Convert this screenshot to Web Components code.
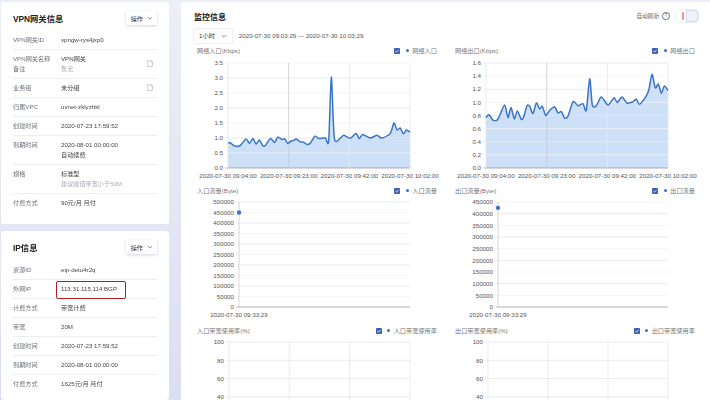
<!DOCTYPE html>
<html lang="zh">
<head>
<meta charset="utf-8">
<title>VPN网关详情</title>
<style>
  html, body { margin: 0; height: 400px; overflow: hidden; }
  body {
    background: linear-gradient(#eceef8, #dcdff0);
    font-family: "Liberation Sans", "Noto Sans CJK SC", sans-serif; color: #333;
  }
  .page {
    display: grid;
    grid-template-columns: 168px 1fr;
    column-gap: 12px;
    padding: 2px 0 0 1px;
    height: 398px;
    filter: blur(0.45px);
  }
  .side { display: flex; flex-direction: column; gap: 7px; min-height: 0; }
</style>
</head>
<body>
<div class="page">
  <div class="side">
    <info-card heading="VPN网关信息">
      <info-row label="VPN网关ID" value="vpngw-rys4jxp0"></info-row>
      <info-row label="VPN网关名称" value="VPN网关" label2="备注" note="暂无" editable></info-row>
      <info-row label="业务组" value="未分组" editable></info-row>
      <info-row label="归属VPC" value="uvnet-zklyzhkl"></info-row>
      <info-row label="创建时间" value="2020-07-23 17:59:52"></info-row>
      <info-row label="到期时间" value="2020-08-01 00:00:00" value2="自动续费"></info-row>
      <info-row label="规格" value="标准型" note="建议峰值带宽小于50M"></info-row>
      <info-row label="付费方式" value="90元/月 月付" last></info-row>
    </info-card>
    <info-card heading="IP信息" fill>
      <info-row label="资源ID" value="eip-detu4r2q"></info-row>
      <info-row label="外网IP" value="113.31.115.114 BGP" marked></info-row>
      <info-row label="计费方式" value="带宽计费"></info-row>
      <info-row label="带宽" value="20M"></info-row>
      <info-row label="创建时间" value="2020-07-23 17:59:52"></info-row>
      <info-row label="到期时间" value="2020-08-01 00:00:00"></info-row>
      <info-row label="付费方式" value="1625元/月 月付" last></info-row>
    </info-card>
  </div>
  <monitor-panel>
    <line-chart heading="网络入口(Kbps)" legend="网络入口" left="31" ymax="3.5" ystep="0.5" dec="1" series="in"></line-chart>
    <line-chart heading="网络出口(Kbps)" legend="网络出口" left="31" ymax="1.6" ystep="0.2" dec="1" series="out"></line-chart>
    <line-chart heading="入口流量(Byte)" legend="入口流量" left="42" ymax="500000" ystep="50000" point="450000"></line-chart>
    <line-chart heading="出口流量(Byte)" legend="出口流量" left="43" ymax="450000" ystep="50000" point="425000"></line-chart>
    <line-chart heading="入口带宽使用率(%)" legend="入口带宽使用率" left="32" ymax="100" ystep="20"></line-chart>
    <line-chart heading="出口带宽使用率(%)" legend="出口带宽使用率" left="33" ymax="100" ystep="20"></line-chart>
  </monitor-panel>
</div>

<script>
const CHEVRON = `<svg width="6" height="6" viewBox="0 0 8 8" fill="none" stroke="#666" stroke-width="1"><path d="M1.2 2.8 4 5.6l2.8-2.8"/></svg>`;

class OpButton extends HTMLElement {
  constructor() {
    super();
    this.attachShadow({ mode: "open" }).innerHTML = `
      <style>
        :host {
          display: inline-flex; align-items: center; gap: 4px;
          height: 14px; padding: 0 4px 0 5px;
          background: #fff; border-radius: 1px;
          box-shadow: 0 1px 3px rgba(30, 40, 90, 0.2);
          font-size: 6.2px; color: #333;
        }
      </style>
      <slot></slot>${CHEVRON}`;
  }
}

class InfoCard extends HTMLElement {
  constructor() {
    super();
    this.attachShadow({ mode: "open" }).innerHTML = `
      <style>
        :host {
          display: block; box-sizing: border-box;
          background: #fff; border-radius: 3px;
          padding: 8.5px 12px 12.5px 12px;
        }
        :host([fill]) { flex: 1; min-height: 0; padding-bottom: 0; overflow: hidden; }
        header {
          display: flex; align-items: center; justify-content: space-between;
          height: 15px; margin-bottom: 5px;
        }
        :host([fill]) header { margin-bottom: 6px; }
        h2 { margin: 0; font-size: 8.3px; font-weight: 700; color: #222; }
      </style>
      <header><h2></h2><op-button>操作</op-button></header>
      <slot></slot>`;
    this.shadowRoot.querySelector("h2").textContent = this.getAttribute("heading");
  }
}

class InfoRow extends HTMLElement {
  constructor() {
    super();
    const label = this.getAttribute("label");
    const label2 = this.getAttribute("label2");
    const value = this.getAttribute("value");
    const value2 = this.getAttribute("value2");
    const note = this.getAttribute("note");
    this.attachShadow({ mode: "open" }).innerHTML = `
      <style>
        :host {
          display: grid; grid-template-columns: 48px 1fr; position: relative;
          padding: 4px 0; border-bottom: 1px solid #eceef2;
          font-size: 6.15px; line-height: 10px; color: #444;
        }
        :host([last]) { border-bottom: 0; }
        .k { color: #6c7078; white-space: nowrap; }
        .note { color: #a6a9b0; }
        .v { white-space: nowrap; }
        svg { position: absolute; right: 4px; top: 50%; margin-top: -3.5px; }
        .mark {
          position: absolute; left: 43px; top: 1.8px; width: 69.5px; height: 17.4px; box-sizing: border-box;
          border: 1.8px solid #b01c24; border-radius: 2px;
        }
      </style>
      <div class="k"><div>${label}</div>${label2 ? `<div>${label2}</div>` : ""}</div>
      <div class="v"><div>${value}</div>
        ${value2 ? `<div>${value2}</div>` : ""}
        ${note ? `<div class="note">${note}</div>` : ""}
      </div>
      ${this.hasAttribute("editable") ? `<svg width="6" height="7" viewBox="0 0 6 7" fill="none" stroke="#aaa" stroke-width=".6"><path d="M.3.3h3.6l1.8 1.8v4.6H.3zM3.9.3v1.8h1.8"/></svg>` : ""}
      ${this.hasAttribute("marked") ? `<div class="mark"></div>` : ""}`;
  }
}

class MonitorPanel extends HTMLElement {
  constructor() {
    super();
    this.attachShadow({ mode: "open" }).innerHTML = `
      <style>
        :host {
          display: block; box-sizing: border-box; height: 398px; overflow: hidden;
          background: #fff; padding: 8px 15px 0 13px; border-radius: 3px 0 0 0;
        }
        .top { display: flex; align-items: center; justify-content: space-between; height: 12px; }
        h2 { margin: 0; font-size: 8px; font-weight: 700; color: #222; }
        .refresh { display: flex; align-items: center; font-size: 5.6px; color: #666; margin-right: -3px; }
        .help {
          width: 5.5px; height: 5.5px; border: 0.8px solid #6b7180; border-radius: 50%;
          font-size: 4.5px; line-height: 5.5px; text-align: center; margin: 0 6px 0 3px;
        }
        .toggle {
          width: 22.5px; height: 11.5px; display: flex; box-sizing: border-box; border-radius: 2px;
          box-shadow: 0 0 2px rgba(30, 40, 90, 0.25); overflow: hidden;
        }
        .toggle i { flex: 1; background: #fff; position: relative; }
        .toggle i + i { background: #eef0fa; border: 0.6px solid #d6d9e6; }
        .toggle i::after { content: ""; position: absolute; left: 6px; top: 2px; width: 2px; height: 7.5px; background: #e39aa0; }
        .toggle i + i::after { display: none; }
        .range { display: flex; align-items: center; gap: 7px; height: 15px; margin: 6px 0 2px; font-size: 6.2px; color: #555; }
        .select {
          display: flex; align-items: center; gap: 6px; height: 14px; padding: 0 5px;
          box-shadow: 0 0 2px rgba(30, 40, 90, 0.2); font-size: 6.2px; color: #333;
        }
        .grid { display: grid; grid-template-columns: 240px 240px; column-gap: 18px; margin-left: 3px; }
      </style>
      <div class="top">
        <h2>监控信息</h2>
        <div class="refresh">自动刷新<span class="help">?</span><span class="toggle"><i></i><i></i></span></div>
      </div>
      <div class="range"><span class="select">1小时 ${CHEVRON}</span><span>2020-07-30 09:03:29 — 2020-07-30 10:03:29</span></div>
      <div class="grid"><slot></slot></div>`;
  }
}

// [x in the plot 0..1, value] read off the reference
const SERIES = {
  in: [[143,.83],[150,.84],[163,.73],[180,.75],[197,.97],[207,.82],[218,.98],[227,.8],[237,.93],[247,.75],[255,.75],[270,.98],[283,.85],[292,1.03],[305,.95],[313,.97],[322,.82],[332,.9],[340,.92],[348,.97],[360,.87],[370,.86],[380,.78],[390,.83],[404,1.06],[415,.98],[435,1.01],[445,.9],[453,3.03],[462,1],[480,1],[490,1.09],[510,.99],[527,1.15],[537,.98],[547,1.12],[570,1],[590,1.09],[603,1],[625,1.1],[632,1.2],[641,1.5],[650,1.27],[660,1.33],[669,1.14],[678,1.27],[689,1.2]].map(([x, v]) => [(x - 143) / 546, v]),
  out: [[139,.77],[148,.81],[160,.73],[172,.73],[180,.8],[195,.96],[205,.77],[214,.92],[224,.75],[233,.87],[245,.74],[252,.78],[262,.95],[270,.94],[280,.83],[290,.99],[300,.9],[308,.94],[318,.8],[330,.88],[345,.93],[355,.84],[365,.86],[375,.76],[385,.79],[400,1.01],[415,.95],[430,.98],[440,.88],[450,1.36],[458,.96],[470,.95],[485,1.08],[505,.96],[523,1.07],[533,1],[547,1.08],[562,.99],[580,1.01],[590,1.05],[600,.97],[620,1.1],[628,1.2],[637,1.43],[647,1.22],[656,1.28],[665,1.14],[674,1.25],[685,1.18]].map(([x, v]) => [(x - 139) / 546, v])
};

// catmull-rom through the points, as a cubic path
function smooth(pts) {
  let d = `${pts[0][0].toFixed(1)} ${pts[0][1].toFixed(1)}`;
  for (let i = 0; i < pts.length - 1; i++) {
    const p0 = pts[i - 1] || pts[i], p1 = pts[i], p2 = pts[i + 1], p3 = pts[i + 2] || p2;
    const c1 = [p1[0] + (p2[0] - p0[0]) / 8, p1[1] + (p2[1] - p0[1]) / 8];
    const c2 = [p2[0] - (p3[0] - p1[0]) / 8, p2[1] - (p3[1] - p1[1]) / 8];
    d += ` C${c1[0].toFixed(1)} ${c1[1].toFixed(1)} ${c2[0].toFixed(1)} ${c2[1].toFixed(1)} ${p2[0].toFixed(1)} ${p2[1].toFixed(1)}`;
  }
  return d;
}

class LineChart extends HTMLElement {
  constructor() {
    super();
    const heading = this.getAttribute("heading");
    const legend = this.getAttribute("legend");
    const tall = this.getAttribute("ymax") === "100" ? 65 : 130;
    this.attachShadow({ mode: "open" }).innerHTML = `
      <style>
        :host { display: block; font-size: 6.2px; color: #777; }
        .head { display: flex; justify-content: space-between; align-items: center; height: 10px; }
        .legend { display: flex; align-items: center; gap: 3.5px; white-space: nowrap; margin-top: 1px; }
        .box {
          width: 6px; height: 6px; background: #3d5fb8; border-radius: 1px; margin-right: 2px;
          display: inline-flex;
        }
        .box svg { width: 6px; height: 6px; }
        .dot { width: 3px; height: 3px; border-radius: 50%; background: #3d6fc8; }
        .plot { display: block; width: 240px; height: ${tall}px; overflow: visible; }
        text { font-size: 6.2px; fill: #555; font-family: "Liberation Sans", sans-serif; }
      </style>
      <div class="head"><span>${heading}</span>
        <span class="legend"><span class="box"><svg viewBox="0 0 6 6" fill="none" stroke="#fff" stroke-width=".8"><path d="M1.3 3 2.6 4.2 4.7 1.8"/></svg></span><span class="dot"></span><span>${legend}</span></span>
      </div>
      <svg class="plot" viewBox="0 0 240 ${tall}">${this.plot()}</svg>`;
  }

  plot() {
    const left = +this.getAttribute("left");
    const right = 213;
    const ymax = +this.getAttribute("ymax");
    const ystep = +this.getAttribute("ystep");
    const dec = +this.getAttribute("dec") || 0;
    const name = this.getAttribute("series");
    const point = this.getAttribute("point");
    const top = name ? 8 : 7;
    const bottom = top + 105;
    const percent = ymax === 100;
    const h = percent ? 91.5 : 105;
    const y = (v) => top + h - (v / ymax) * h;
    const pw = right - left;
    let out = "";
    if (name) {
      const pts = SERIES[name].map(([f, v]) => [left + f * pw, y(v)]);
      out += `<path d="M${left} ${bottom} L${smooth(pts)} L${right} ${bottom}Z" fill="#b3cff5" fill-opacity=".65"/>`;
    }
    const ticks = Math.round(ymax / ystep);
    for (let i = percent ? 2 : 0; i <= ticks; i++) {
      const v = i * ystep;
      const yy = y(v);
      const color = i === 0 ? "#9aa0aa" : i % 2 && !percent ? "#f1f2f5" : "#e4e6ea";
      out += `<line x1="${left - 2.5}" x2="${right}" y1="${yy}" y2="${yy}" stroke="${color}" stroke-width=".8"/>`;
      out += `<text x="${left - 5}" y="${yy + 2.2}" text-anchor="end">${v.toFixed(dec)}</text>`;
    }
    if (name) {
      [0, 1, 2, 3].forEach((i) => {
        const x = left + (pw * i) / 3;
        out += `<line x1="${x}" x2="${x}" y1="${top}" y2="${bottom}" stroke="${i === 1 ? "#c4c8d0" : "#e4e6ea"}" stroke-width=".8"/>`;
      });
      const pts = SERIES[name].map(([f, v]) => [left + f * pw, y(v)]);
      out += `<path d="M${smooth(pts)}" fill="none" stroke="#3a75c4" stroke-width="1.5" stroke-linejoin="round"/>`;
      ["09:04:00", "09:23:00", "09:42:00", "10:02:00"].forEach((t, i) => {
        out += `<text x="${left + (pw * i) / 3}" y="${bottom + 10}" text-anchor="middle">2020-07-30 ${t}</text>`;
      });
    } else if (point) {
      out += `<line x1="${left}" x2="${left}" y1="${top}" y2="${bottom}" stroke="#c9ccd3" stroke-width=".8"/>`;
      out += `<circle cx="${left}" cy="${y(+point)}" r="2.2" fill="#3a75c4"/>`;
      out += `<text x="${left}" y="${bottom + 10}" text-anchor="middle">2020-07-30 09:33:29</text>`;
    } else {
      [0, 1, 2, 3].forEach((i) => {
        const x = left + (pw * i) / 3;
        out += `<line x1="${x}" x2="${x}" y1="${top}" y2="${top + h}" stroke="#e4e6ea" stroke-width=".8"/>`;
      });
    }
    return out;
  }
}

customElements.define("op-button", OpButton);
customElements.define("info-card", InfoCard);
customElements.define("info-row", InfoRow);
customElements.define("monitor-panel", MonitorPanel);
customElements.define("line-chart", LineChart);
</script>
</body>
</html>
